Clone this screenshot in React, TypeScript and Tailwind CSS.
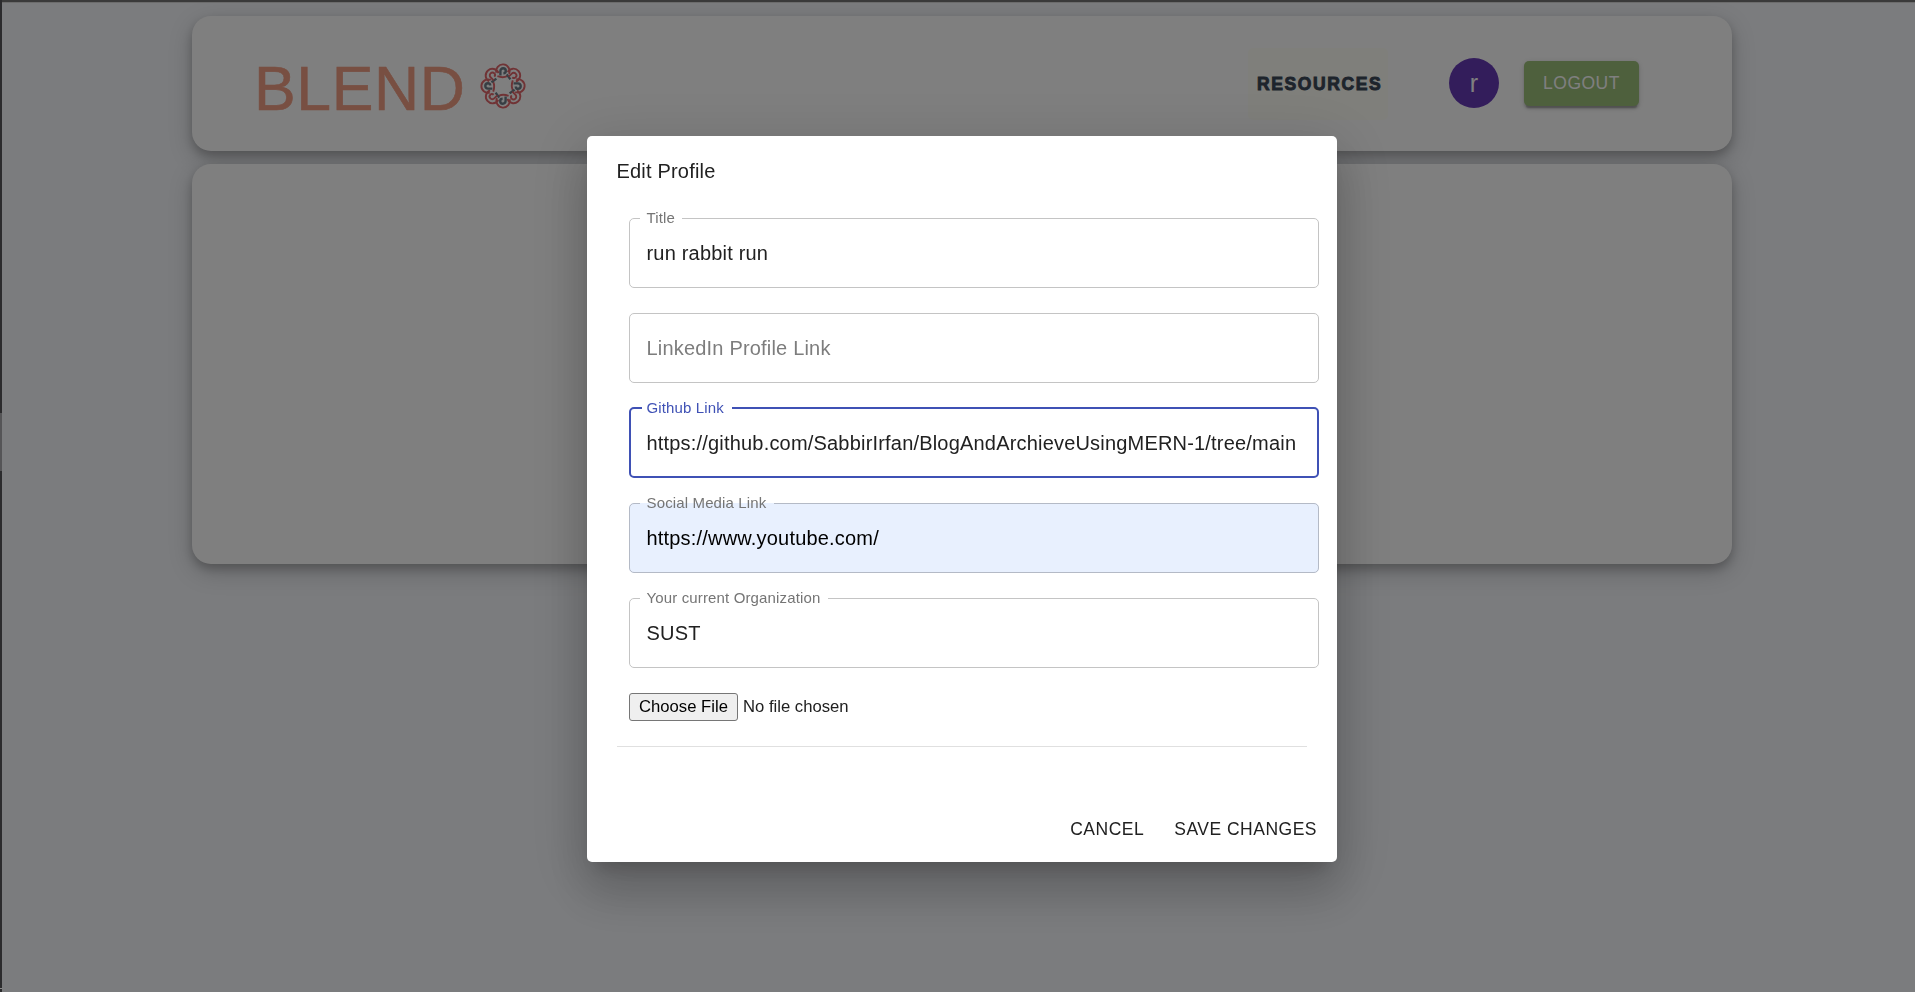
import React from "react";

type FieldProps = {
  label?: string;
  value?: string;
  placeholder?: string;
  state?: "idle" | "focused" | "autofill";
};

function Field({ label, value, placeholder, state = "idle" }: FieldProps) {
  if (!label) {
    return (
      <div className="h-[80px] pt-[10px]">
        <input
          className="block h-[70px] w-full rounded-[5px] border border-[#c4c4c4] px-[16.5px] tracking-[0.19px] outline-none placeholder:text-[#7d7d7d]"
          placeholder={placeholder}
        />
      </div>
    );
  }
  const box =
    state === "focused"
      ? "border-2 border-[#3f51b5] px-[11px]"
      : state === "autofill"
        ? "border border-[#b4bac6] bg-[#e8f0fe] px-[10px]"
        : "border border-[#c4c4c4] px-[10px]";
  const legend =
    state === "focused"
      ? "pl-[4.5px] pr-[8.5px] text-[#3f51b5]"
      : "pl-[6.5px] pr-[7.5px] text-[#757575]";
  const input =
    state === "focused"
      ? "pl-[4.5px] text-[#212121]"
      : state === "autofill"
        ? "pl-[6.5px] text-black"
        : "pl-[6.5px] text-[#212121]";
  return (
    <fieldset className={`h-[80px] min-w-0 rounded-[5px] ${box}`}>
      <legend className={`h-[20px] text-[15px] leading-[20px] tracking-[0.14px] ${legend}`}>
        {label}
      </legend>
      <input
        className={`block h-[51px] w-full bg-transparent tracking-[0.19px] outline-none ${input}`}
        defaultValue={value}
      />
    </fieldset>
  );
}

const PETALS = [0, 45, 90, 135, 180, 225, 270, 315];

function KnotLogo() {
  return (
    <svg className="h-[46px] w-[46px]" viewBox="-23 -23 46 46" fill="none" strokeWidth="1.9">
      {PETALS.map((angle, i) => (
        <g key={angle} transform={`rotate(${angle})`}>
          <path d="M-6.6 -13.2A6.7 6.7 0 1 1 6 -12.2" stroke="#e0666b" />
          <path
            d="M-2.6 -10.6V-15a2.7 2.7 0 0 1 5.4 0q0 2.2 -2.4 2.2"
            stroke={i % 2 ? "#e0666b" : "#6f7d88"}
            strokeWidth={i % 2 ? 1.9 : 2.4}
          />
          {i % 2 === 0 && <path d="M-5.6 -9.8Q0 -7.8 4.2 -9.8" stroke="#e0666b" />}
          {i % 2 === 0 && <path d="M3.8 -11.6L7.4 -6.6" stroke="#6f7d88" strokeWidth="2.3" />}
        </g>
      ))}
    </svg>
  );
}

const CARD =
  "rounded-[19px] bg-white shadow-[0_5px_10px_rgba(0,0,0,0.2),0_7.5px_25px_rgba(0,0,0,0.19)]";

function Header() {
  return (
    <header className={`flex h-[135px] items-center pl-[62px] pr-[93px] ${CARD}`}>
      <h1 className="w-[210px] whitespace-nowrap pt-[10px] text-[62.5px] leading-[75px] tracking-[0.6px] text-[#f09e84] [-webkit-text-stroke:0.6px_#f09e84]">
        BLEND
      </h1>
      <div className="ml-[16px] pt-[4px]">
        <KnotLogo />
      </div>
      <nav className="ml-auto flex items-center">
        <a className="mr-[61px] w-[140px] whitespace-nowrap rounded-[5px] bg-[#fffff7] py-[22px] pl-[9px] text-[17.5px] font-black leading-[28px] tracking-[1.6px] text-[#3c4858] [-webkit-text-stroke:0.9px_#3c4858]">
          RESOURCES
        </a>
        <span className="mr-[25px] mb-[2px] flex h-[50px] w-[50px] items-center justify-center rounded-full bg-[#673ab7] pt-[3px] text-[25px] text-white">
          r
        </span>
        <button className="mb-[1px] h-[45px] w-[115px] rounded-[5px] bg-[#9cc07a] text-[17.5px] tracking-[0.5px] text-white shadow-[0_3.75px_1.25px_-2.5px_rgba(0,0,0,0.2),0_2.5px_2.5px_rgba(0,0,0,0.14),0_1.25px_6.25px_rgba(0,0,0,0.12)]">
          LOGOUT
        </button>
      </nav>
    </header>
  );
}

function EditProfileDialog() {
  return (
    <div className="flex h-[726px] w-[750px] flex-col rounded-[5px] bg-white text-[20px] text-[#212121] shadow-[0_13.75px_18.75px_-8.75px_rgba(0,0,0,0.2),0_30px_47.5px_3.75px_rgba(0,0,0,0.14),0_11.25px_57.5px_10px_rgba(0,0,0,0.12)]">
      <h2 className="pl-[29.5px] pt-[20px] leading-[30px] tracking-[0.19px]">Edit Profile</h2>
      <form className="ml-[42px] mr-[18px] mt-[22px] flex flex-col gap-[15px]">
        <Field label="Title" value="run rabbit run" />
        <Field placeholder="LinkedIn Profile Link" />
        <Field
          label="Github Link"
          value="https://github.com/SabbirIrfan/BlogAndArchieveUsingMERN-1/tree/main"
          state="focused"
        />
        <Field label="Social Media Link" value="https://www.youtube.com/" state="autofill" />
        <Field label="Your current Organization" value="SUST" />
      </form>
      <div className="ml-[42px] mt-[25px] flex items-center gap-[5px] text-[16.67px]">
        <button className="h-[28px] w-[109px] rounded-[3px] border border-[#767676] bg-[#efefef] leading-[20px] text-black">
          Choose File
        </button>
        <span className="pb-[2px]">No file chosen</span>
      </div>
      <hr className="mx-[30px] mt-[25px] border-[#e0e0e0]" />
      <div className="mt-auto flex justify-end gap-[10px] p-[10px] text-[17.5px] leading-[31px] tracking-[0.5px]">
        <button className="px-[10px] py-[7.5px]">CANCEL</button>
        <button className="px-[10px] py-[7.5px]">SAVE CHANGES</button>
      </div>
    </div>
  );
}

export default function App() {
  return (
    <div className="h-[992px] w-[1915px] overflow-hidden bg-[#f6f8fc] font-['Liberation_Sans',Arial,sans-serif]">
      <div className="flex flex-col gap-[13px] pl-[192px] pr-[183px] pt-[16px]">
        <Header />
        <main className={`h-[400px] ${CARD}`} />
      </div>
      <div className="fixed inset-0 flex items-start justify-center bg-black/50 pl-[9px] pt-[136px]">
        <EditProfileDialog />
      </div>
      <div className="fixed inset-x-0 top-0 h-[3px] border-b border-[#6c6c6c] bg-[#3a3a3a]" />
      <div className="fixed inset-y-0 left-0 flex w-[2px] flex-col bg-[#2b2b2d]">
        <div className="mt-[413px] h-[58px] bg-[#555557]" />
        <div className="mt-auto mb-[3px] h-px bg-[#8a8a8a]" />
      </div>
    </div>
  );
}
